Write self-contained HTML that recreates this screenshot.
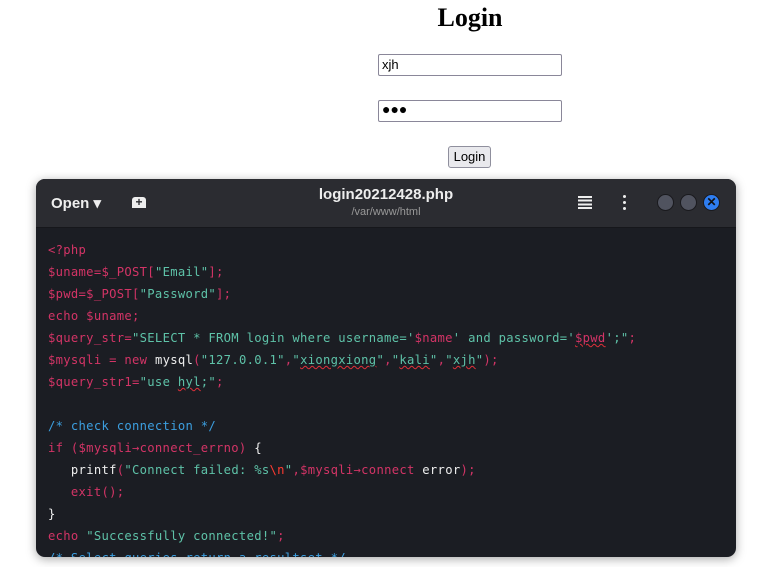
<!DOCTYPE html>
<html><head><meta charset="utf-8"><style>
body{margin:0;width:767px;height:567px;background:#fff;position:relative;overflow:hidden;font-family:"Liberation Sans",sans-serif}
h1{position:absolute;left:0;width:940px;top:3px;margin:0;text-align:center;font-family:"Liberation Serif",serif;font-size:26px;font-weight:bold}
.in{position:absolute;left:378px;width:184px;height:22px;border:1px solid #8a8799;border-radius:2px;box-sizing:border-box;font-size:13px;padding:2px 3px}
.btn{position:absolute;left:448px;top:146px;width:43px;height:22px;border:1px solid #8f8f9d;border-radius:3px;background:#e9e9ed;font-size:13px;text-align:center;line-height:20px;box-sizing:border-box}
.win{position:absolute;left:36px;top:179px;width:700px;height:378px;border-radius:9px;overflow:hidden;background:#1b1d23;box-shadow:0 2px 10px rgba(0,0,0,.35)}
.hd{height:48px;background:#2b2c31;border-bottom:1px solid #16171b;position:relative;color:#eee}
.code{position:absolute;top:60px;left:12px;font-family:"DejaVu Sans Mono","Liberation Mono",monospace;font-size:12.2px;letter-spacing:0.3px;line-height:22px;white-space:pre;color:#d33466}
.t{color:#5ec2a8}.w{color:#eee}.b{color:#3c9fe0}.r{color:#ff3b30}
.u{text-decoration:underline wavy #e0303a;text-decoration-thickness:1px}
.c{position:absolute;top:15px;width:17px;height:17px;border-radius:50%;background:#50535f;border:1px solid #1a1a1e;box-sizing:border-box}
</style></head><body>
<h1>Login</h1>
<div class="in" style="top:54px">xjh</div>
<div class="in" style="top:100px;font-size:14px;line-height:13px">●●●</div>
<div class="btn">Login</div>
<div class="win">
<div class="hd">
<div style="position:absolute;left:15px;top:15px;font-size:15px;font-weight:bold">Open ▾</div>
<div style="position:absolute;left:96px;top:18px;width:14px;height:11px;background:#eee;border-radius:3px 3px 0 0;color:#2b2c31;font-size:12px;line-height:11px;text-align:center;font-weight:bold">+</div>
<div style="position:absolute;left:0;width:700px;top:7px;text-align:center;font-size:15px;font-weight:bold">login20212428.php</div>
<div style="position:absolute;left:0;width:700px;top:27px;text-align:center;font-size:11px;color:#999">/var/www/html</div>
<div style="position:absolute;left:542px;top:17px;width:14px;height:13px;background:repeating-linear-gradient(#eee 0 2px,transparent 2px 3.7px)"></div>
<div style="position:absolute;left:587px;top:16px;width:3px;height:3px;background:#eee;border-radius:50%;box-shadow:0 6px #eee,0 12px #eee"></div>
<div class="c" style="left:621px"></div><div class="c" style="left:644px"></div>
<div class="c" style="left:667px;background:#2e7df0;color:#111;font-size:12px;font-weight:bold;text-align:center;line-height:15px">✕</div>
</div>
<div class="code">&lt;?php
$uname=$_POST[<span class="t">"Email"</span>];
$pwd=$_POST[<span class="t">"Password"</span>];
echo $uname;
$query_str=<span class="t">"SELECT * FROM login where username='</span>$name<span class="t">' and password='</span><span class="u">$pwd</span><span class="t">';"</span>;
$mysqli = new <span class="w">mysql</span>(<span class="t">"127.0.0.1"</span>,<span class="t">"<span class="u">xiongxiong</span>"</span>,<span class="t">"<span class="u">kali</span>"</span>,<span class="t">"<span class="u">xjh</span>"</span>);
$query_str1=<span class="t">"use <span class="u">hyl</span>;"</span>;

<span class="b">/* check connection */</span>
if ($mysqli→connect_errno) <span class="w">{</span>
   <span class="w">printf</span>(<span class="t">"Connect failed: %s</span><span class="r">\n</span><span class="t">"</span>,$mysqli→connect <span class="w">error</span>);
   exit();
<span class="w">}</span>
echo <span class="t">"Successfully connected!"</span>;
<span class="b">/* Select queries return a resultset */</span></div>
</div>
</body></html>
